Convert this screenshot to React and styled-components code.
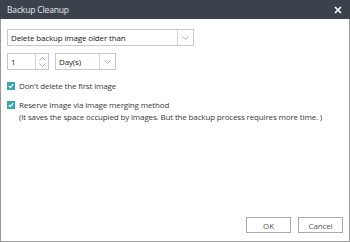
import styled, { createGlobalStyle } from "styled-components";

const Global = createGlobalStyle`
  html, body {
    margin: 0;
    padding: 0;
    background: #ffffff;
  }
  * {
    box-sizing: border-box;
  }
`;

const Window = styled.div`
  width: 350px;
  height: 242px;
  display: flex;
  flex-direction: column;
  border: 1px solid #9a9a9a;
  border-top: none;
  font-family: "Open Sans", "Noto Sans", sans-serif;
  font-size: 8px;
  letter-spacing: -0.15px;
  color: #3a3a3a;
  background: #fff;
`;

const TitleBar = styled.div`
  height: 19px;
  margin: 0 -1px;
  display: flex;
  align-items: center;
  justify-content: space-between;
  padding: 0 8px 0 7px;
  background: #3b424b;
  color: #e8eaec;
  font-size: 8.5px;
`;

const CloseIcon = () => (
  <svg width="8" height="8" viewBox="0 0 8 8">
    <path d="M1 1 L7 7 M7 1 L1 7" stroke="#fff" strokeWidth="1.6" />
  </svg>
);

const Body = styled.div`
  flex: 1;
  display: flex;
  flex-direction: column;
  padding: 10px 6px 8px;
`;

const Row = styled.div`
  display: flex;
  gap: 6px;
  margin-bottom: ${(p) => p.$mb || 0}px;
`;

const Field = styled.div`
  width: ${(p) => p.$w}px;
  height: 17px;
  display: flex;
  border: 1px solid #c8c8c8;
  background: #fff;
`;

const FieldText = styled.div`
  flex: 1;
  display: flex;
  align-items: center;
  padding-left: 3px;
  color: #222;
`;

const ArrowBox = styled.div`
  width: 16px;
  border-left: 1px solid #d4d4d4;
  display: flex;
  flex-direction: column;
  align-items: center;
  justify-content: center;
`;

const Chevron = ({ up }) => (
  <svg width="7" height="4" viewBox="0 0 7 4">
    <path
      d={up ? "M0.5 3.5 L3.5 0.5 L6.5 3.5" : "M0.5 0.5 L3.5 3.5 L6.5 0.5"}
      fill="none"
      stroke="#9a9a9a"
      strokeWidth="0.8"
    />
  </svg>
);

const Spinner = styled(ArrowBox)`
  width: 13px;
  gap: 2px;
`;

const CheckRow = styled.label`
  display: flex;
  align-items: flex-start;
  gap: 4px;
  margin-bottom: ${(p) => p.$mb || 0}px;
`;

const Box = styled.span`
  width: 8px;
  height: 8px;
  margin-top: 1px;
  flex-shrink: 0;
  background: #3aa3b5;
  display: flex;
  align-items: center;
  justify-content: center;
`;

const Tick = () => (
  <svg width="6" height="6" viewBox="0 0 6 6">
    <path d="M0.8 3 L2.4 4.6 L5.2 1.2" fill="none" stroke="#fff" strokeWidth="1.1" />
  </svg>
);

const Lines = styled.div`
  line-height: 12px;
  margin-top: -1px;
`;

const Footer = styled.div`
  margin-top: auto;
  display: flex;
  justify-content: flex-end;
  gap: 7px;
`;

const Button = styled.button`
  width: 45px;
  height: 16px;
  padding: 0;
  border: 1px solid #aaaaaa;
  background: #fff;
  font-family: inherit;
  font-size: 8px;
  letter-spacing: inherit;
  color: #555;
`;

export default function App() {
  return (
    <>
      <Global />
      <Window>
        <TitleBar>
          <span>Backup Cleanup</span>
          <CloseIcon />
        </TitleBar>
        <Body>
          <Row $mb={7}>
            <Field $w={187}>
              <FieldText>Delete backup image older than</FieldText>
              <ArrowBox>
                <Chevron />
              </ArrowBox>
            </Field>
          </Row>
          <Row $mb={11}>
            <Field $w={42}>
              <FieldText>1</FieldText>
              <Spinner>
                <Chevron up />
                <Chevron />
              </Spinner>
            </Field>
            <Field $w={61}>
              <FieldText>Day(s)</FieldText>
              <ArrowBox>
                <Chevron />
              </ArrowBox>
            </Field>
          </Row>
          <CheckRow $mb={8}>
            <Box>
              <Tick />
            </Box>
            <Lines>Don't delete the first image</Lines>
          </CheckRow>
          <CheckRow>
            <Box>
              <Tick />
            </Box>
            <Lines>
              Reserve image via image merging method
              <br />
              (It saves the space occupied by images. But the backup process requires more time. )
            </Lines>
          </CheckRow>
          <Footer>
            <Button>OK</Button>
            <Button>Cancel</Button>
          </Footer>
        </Body>
      </Window>
    </>
  );
}
